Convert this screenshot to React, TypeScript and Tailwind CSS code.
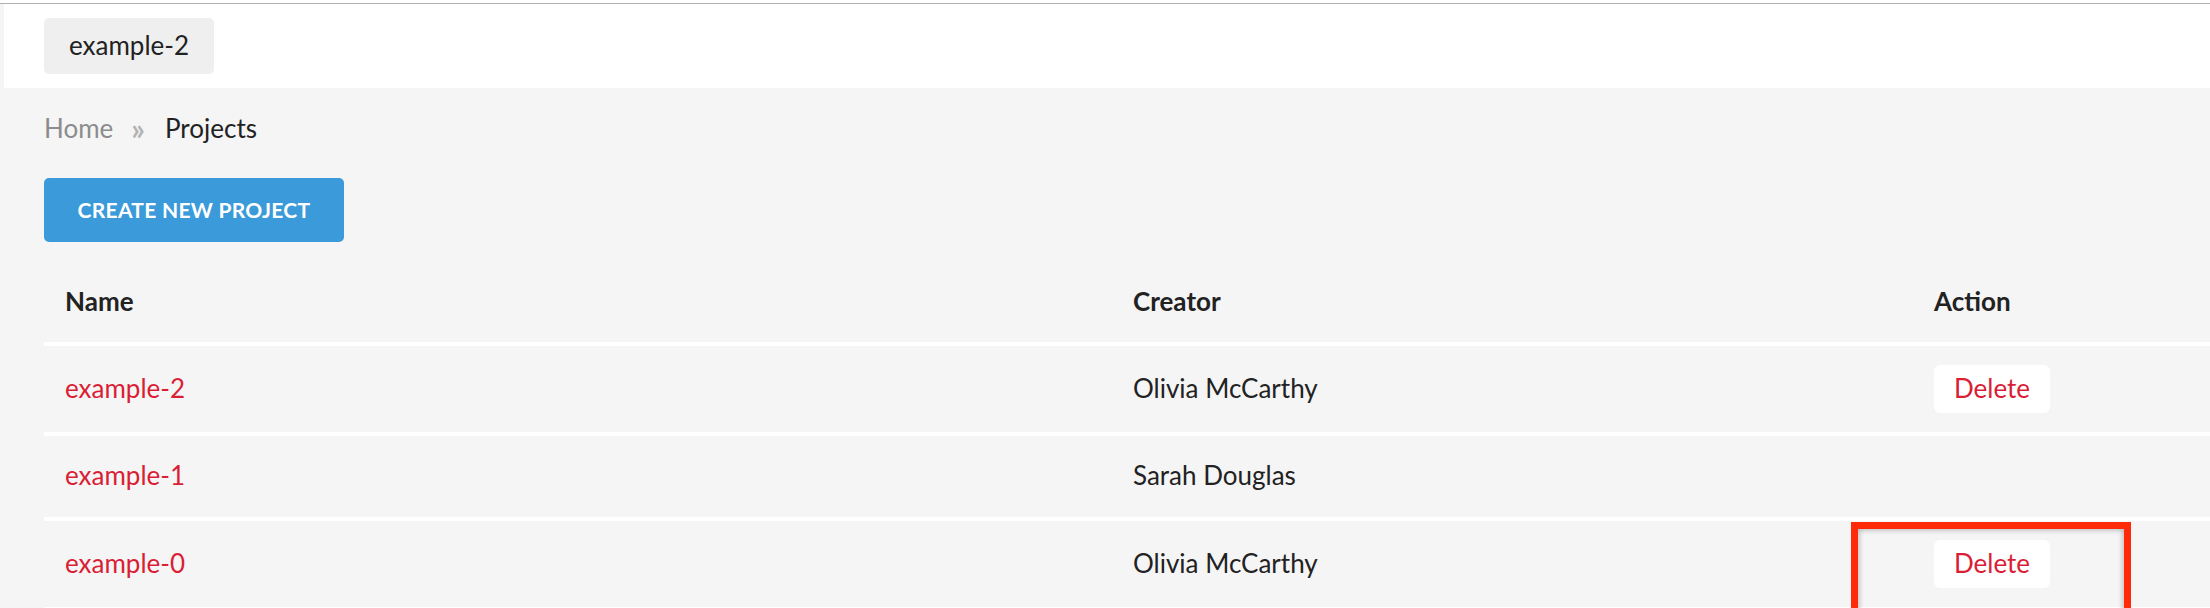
import React from 'react';

type Project = {
  name: string;
  creator: string;
  canDelete: boolean;
};

const projects: Project[] = [
  { name: 'example-2', creator: 'Olivia McCarthy', canDelete: true },
  { name: 'example-1', creator: 'Sarah Douglas', canDelete: false },
  { name: 'example-0', creator: 'Olivia McCarthy', canDelete: true },
];

const App = () => {
  return (
    <div className="relative min-h-screen overflow-hidden bg-[#f5f5f5] font-['Lato','Liberation_Sans',sans-serif] text-[#222]">
      <div className="h-[3px] bg-white" />
      <div className="h-px bg-[#b3b3b3]" />

      {/* top tab bar */}
      <div className="ml-[4px] flex h-[84px] items-center bg-white pl-[40px]">
        <div className="flex h-[56px] items-center rounded-[5px] bg-[#efefef] px-[25px] pb-[2px] text-[26px] leading-none">
          example-2
        </div>
      </div>

      <div className="pl-[44px]">
        {/* breadcrumb */}
        <div className="flex h-[82px] items-center pb-[2px] text-[26px]">
          <span className="text-[#8c8c8c]">Home</span>
          <span className="ml-[18px] mr-[20px] text-[30px] font-bold text-[#b3b3b3]">»</span>
          <span className="text-[#222]">Projects</span>
        </div>

        <div className="pt-[8px]">
          <button className="flex h-[64px] w-[300px] items-center justify-center rounded-[5px] bg-[#3b9ad9] pb-[1px] text-[21px] font-bold tracking-[0.3px] text-white">
            CREATE NEW PROJECT
          </button>
        </div>

        {/* projects table */}
        <table className="mt-[20px] w-[2400px] border-collapse text-left text-[26px]">
          <thead>
            <tr className="border-b-[4px] border-white">
              <th className="w-[1068px] px-[21px] pt-[19px] pb-[21px] font-bold leading-[40px]">Name</th>
              <th className="w-[801px] px-[21px] pt-[19px] pb-[21px] font-bold leading-[40px]">Creator</th>
              <th className="px-[21px] pt-[19px] pb-[21px] font-bold leading-[40px]">Action</th>
            </tr>
          </thead>
          <tbody>
            {projects.map((p) => (
              <tr key={p.name} className="border-b-[4px] border-white">
                <td className="px-[21px] pt-[19px] pb-[21px] align-middle leading-[41px] text-[#d91e36]">{p.name}</td>
                <td className="px-[21px] pt-[19px] pb-[21px] align-middle leading-[41px]">{p.creator}</td>
                <td className="px-[21px] py-[19px] align-middle leading-[41px]">
                  {p.canDelete && (
                    <button className="flex h-[48px] w-[116px] items-center justify-center rounded-[6px] bg-white pb-[2px] text-[#d91e36]">
                      Delete
                    </button>
                  )}
                </td>
              </tr>
            ))}
          </tbody>
        </table>
      </div>

      {/* annotation highlight over the last delete button */}
      <div className="pointer-events-none absolute left-[1851px] top-[522px] h-[120px] w-[280px] border-[7px] border-[#ff2a0a] shadow-[inset_0_0_6px_rgba(0,0,0,0.35)]" />
    </div>
  );
};

export default App;
